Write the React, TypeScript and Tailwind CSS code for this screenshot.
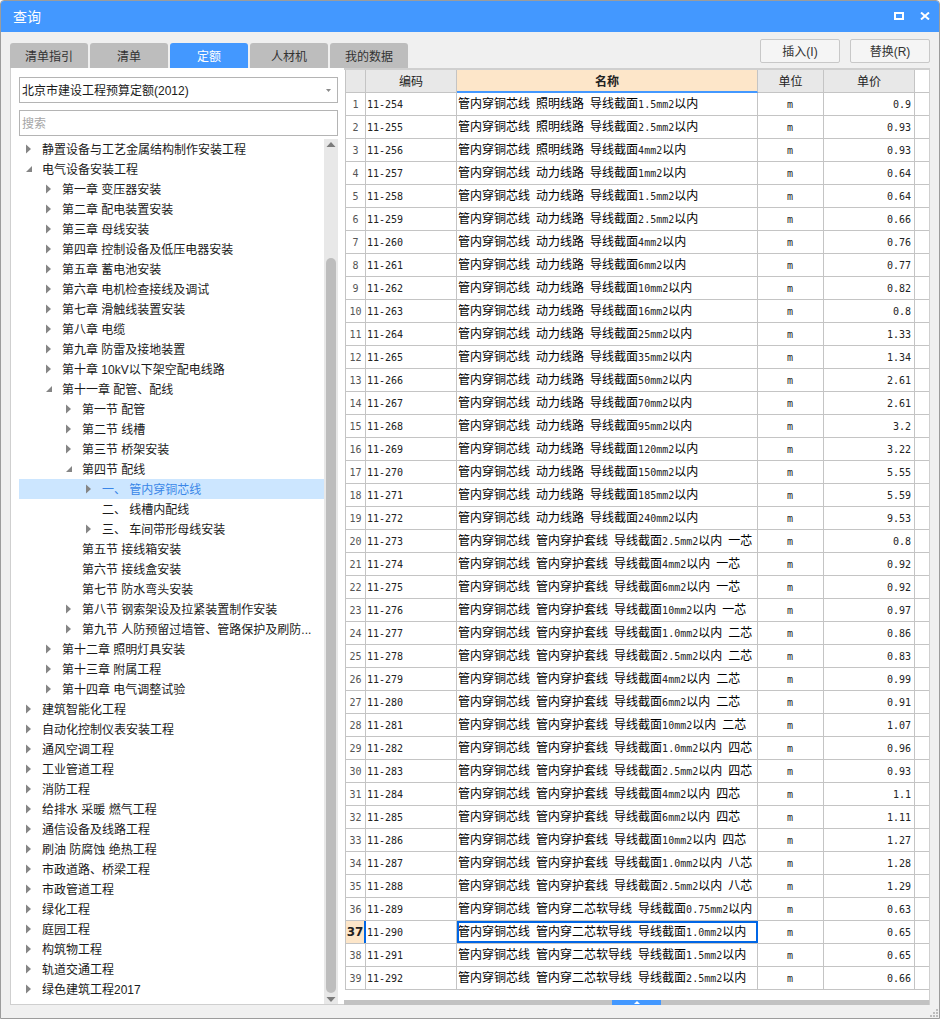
import { Fragment } from "react";

type TreeRow = { level: number; state?: "open" | "closed"; text: string; selected?: boolean };

const treeRows: TreeRow[] = [
  { level: 0, state: "closed", text: "静置设备与工艺金属结构制作安装工程" },
  { level: 0, state: "open", text: "电气设备安装工程" },
  { level: 1, state: "closed", text: "第一章 变压器安装" },
  { level: 1, state: "closed", text: "第二章 配电装置安装" },
  { level: 1, state: "closed", text: "第三章 母线安装" },
  { level: 1, state: "closed", text: "第四章 控制设备及低压电器安装" },
  { level: 1, state: "closed", text: "第五章 蓄电池安装" },
  { level: 1, state: "closed", text: "第六章 电机检查接线及调试" },
  { level: 1, state: "closed", text: "第七章 滑触线装置安装" },
  { level: 1, state: "closed", text: "第八章 电缆" },
  { level: 1, state: "closed", text: "第九章 防雷及接地装置" },
  { level: 1, state: "closed", text: "第十章 10kV以下架空配电线路" },
  { level: 1, state: "open", text: "第十一章 配管、配线" },
  { level: 2, state: "closed", text: "第一节 配管" },
  { level: 2, state: "closed", text: "第二节 线槽" },
  { level: 2, state: "closed", text: "第三节 桥架安装" },
  { level: 2, state: "open", text: "第四节 配线" },
  { level: 3, state: "closed", text: "一、 管内穿铜芯线", selected: true },
  { level: 3, text: "二、 线槽内配线" },
  { level: 3, state: "closed", text: "三、 车间带形母线安装" },
  { level: 2, text: "第五节 接线箱安装" },
  { level: 2, text: "第六节 接线盒安装" },
  { level: 2, text: "第七节 防水弯头安装" },
  { level: 2, state: "closed", text: "第八节 钢索架设及拉紧装置制作安装" },
  { level: 2, state: "closed", text: "第九节 人防预留过墙管、管路保护及刷防..." },
  { level: 1, state: "closed", text: "第十二章 照明灯具安装" },
  { level: 1, state: "closed", text: "第十三章 附属工程" },
  { level: 1, state: "closed", text: "第十四章 电气调整试验" },
  { level: 0, state: "closed", text: "建筑智能化工程" },
  { level: 0, state: "closed", text: "自动化控制仪表安装工程" },
  { level: 0, state: "closed", text: "通风空调工程" },
  { level: 0, state: "closed", text: "工业管道工程" },
  { level: 0, state: "closed", text: "消防工程" },
  { level: 0, state: "closed", text: "给排水 采暖 燃气工程" },
  { level: 0, state: "closed", text: "通信设备及线路工程" },
  { level: 0, state: "closed", text: "刷油 防腐蚀 绝热工程" },
  { level: 0, state: "closed", text: "市政道路、桥梁工程" },
  { level: 0, state: "closed", text: "市政管道工程" },
  { level: 0, state: "closed", text: "绿化工程" },
  { level: 0, state: "closed", text: "庭园工程" },
  { level: 0, state: "closed", text: "构筑物工程" },
  { level: 0, state: "closed", text: "轨道交通工程" },
  { level: 0, state: "closed", text: "绿色建筑工程2017" },
];

const indentClass = ["pl-[7px]", "pl-[27px]", "pl-[47px]", "pl-[67px]"];

const priceRows: [string, string][] = [
  ["管内穿铜芯线 照明线路 导线截面1.5mm2以内", "0.9"],
  ["管内穿铜芯线 照明线路 导线截面2.5mm2以内", "0.93"],
  ["管内穿铜芯线 照明线路 导线截面4mm2以内", "0.93"],
  ["管内穿铜芯线 动力线路 导线截面1mm2以内", "0.64"],
  ["管内穿铜芯线 动力线路 导线截面1.5mm2以内", "0.64"],
  ["管内穿铜芯线 动力线路 导线截面2.5mm2以内", "0.66"],
  ["管内穿铜芯线 动力线路 导线截面4mm2以内", "0.76"],
  ["管内穿铜芯线 动力线路 导线截面6mm2以内", "0.77"],
  ["管内穿铜芯线 动力线路 导线截面10mm2以内", "0.82"],
  ["管内穿铜芯线 动力线路 导线截面16mm2以内", "0.8"],
  ["管内穿铜芯线 动力线路 导线截面25mm2以内", "1.33"],
  ["管内穿铜芯线 动力线路 导线截面35mm2以内", "1.34"],
  ["管内穿铜芯线 动力线路 导线截面50mm2以内", "2.61"],
  ["管内穿铜芯线 动力线路 导线截面70mm2以内", "2.61"],
  ["管内穿铜芯线 动力线路 导线截面95mm2以内", "3.2"],
  ["管内穿铜芯线 动力线路 导线截面120mm2以内", "3.22"],
  ["管内穿铜芯线 动力线路 导线截面150mm2以内", "5.55"],
  ["管内穿铜芯线 动力线路 导线截面185mm2以内", "5.59"],
  ["管内穿铜芯线 动力线路 导线截面240mm2以内", "9.53"],
  ["管内穿铜芯线 管内穿护套线 导线截面2.5mm2以内 一芯", "0.8"],
  ["管内穿铜芯线 管内穿护套线 导线截面4mm2以内 一芯", "0.92"],
  ["管内穿铜芯线 管内穿护套线 导线截面6mm2以内 一芯", "0.92"],
  ["管内穿铜芯线 管内穿护套线 导线截面10mm2以内 一芯", "0.97"],
  ["管内穿铜芯线 管内穿护套线 导线截面1.0mm2以内 二芯", "0.86"],
  ["管内穿铜芯线 管内穿护套线 导线截面2.5mm2以内 二芯", "0.83"],
  ["管内穿铜芯线 管内穿护套线 导线截面4mm2以内 二芯", "0.99"],
  ["管内穿铜芯线 管内穿护套线 导线截面6mm2以内 二芯", "0.91"],
  ["管内穿铜芯线 管内穿护套线 导线截面10mm2以内 二芯", "1.07"],
  ["管内穿铜芯线 管内穿护套线 导线截面1.0mm2以内 四芯", "0.96"],
  ["管内穿铜芯线 管内穿护套线 导线截面2.5mm2以内 四芯", "0.93"],
  ["管内穿铜芯线 管内穿护套线 导线截面4mm2以内 四芯", "1.1"],
  ["管内穿铜芯线 管内穿护套线 导线截面6mm2以内 四芯", "1.11"],
  ["管内穿铜芯线 管内穿护套线 导线截面10mm2以内 四芯", "1.27"],
  ["管内穿铜芯线 管内穿护套线 导线截面1.0mm2以内 八芯", "1.28"],
  ["管内穿铜芯线 管内穿护套线 导线截面2.5mm2以内 八芯", "1.29"],
  ["管内穿铜芯线 管内穿二芯软导线 导线截面0.75mm2以内", "0.63"],
  ["管内穿铜芯线 管内穿二芯软导线 导线截面1.0mm2以内", "0.65"],
  ["管内穿铜芯线 管内穿二芯软导线 导线截面1.5mm2以内", "0.65"],
  ["管内穿铜芯线 管内穿二芯软导线 导线截面2.5mm2以内", "0.66"],
];

const tabs = ["清单指引", "清单", "定额", "人材机", "我的数据"];

const cellLine = "border-r border-[#c4c4c4]";
const sansFont = "font-['Liberation_Sans','Noto_Sans_CJK_SC',sans-serif]";
const monoFont = "font-['DejaVu_Sans_Mono',monospace] text-[10px] text-[#222]";

// half-width runs are 6px wide in the grid, same as half a CJK character
function Mixed({ text }: { text: string }) {
  const parts = text.split(/([\x20-\x7e]+)/).filter(Boolean);
  return (
    <>
      {parts.map((part, i) =>
        /^[\x20-\x7e]/.test(part) ? (
          <span key={i} className={monoFont}>
            {part}
          </span>
        ) : (
          <Fragment key={i}>{part}</Fragment>
        ),
      )}
    </>
  );
}

function TreeArrow({ state }: { state?: "open" | "closed" }) {
  return (
    <svg width="8" height="10" viewBox="0 0 8 10" className="mr-2 shrink-0" aria-hidden="true">
      {state === "closed" && <path d="M0 0.5 L5 5 L0 9.5 Z" fill="#858585" />}
      {state === "open" && <path d="M6 2 L6 8 L0 8 Z" fill="#858585" />}
    </svg>
  );
}

function TreeLine({ row }: { row: TreeRow }) {
  return (
    <div
      className={`flex h-5 items-center whitespace-pre ${indentClass[row.level]} ${
        row.selected ? "bg-[#cce6ff] text-[#3a86e8]" : "text-[#1a1a1a]"
      }`}
    >
      <TreeArrow state={row.state} />
      <span className="pt-[2px]">{row.text}</span>
    </div>
  );
}

function TreeScrollbar() {
  return (
    <div className="flex h-full w-[14px] shrink-0 flex-col items-center bg-[#e8e8e8]">
      <svg width="10" height="6" viewBox="0 0 10 6" className="mt-[3px] shrink-0" aria-hidden="true">
        <path d="M5 0 L9.5 5 L0.5 5 Z" fill="#7c7c7c" />
      </svg>
      <div className="mt-[110px] h-[735px] w-[10px] shrink-0 rounded-[5px] bg-[#bdbdbd]" />
      <svg width="10" height="6" viewBox="0 0 10 6" className="mt-[4px] shrink-0" aria-hidden="true">
        <path d="M0.5 0 L9.5 0 L5 5 Z" fill="#7c7c7c" />
      </svg>
    </div>
  );
}

function LeftPanel() {
  return (
    <div className="flex w-[334px] shrink-0 flex-col border-b border-l border-[#cfcfcf] bg-white pl-2 pr-[6px] pt-[9px]">
      <div className="flex h-[26px] shrink-0 items-center justify-between border border-[#b4b4b4] pl-[2px] pr-[6px] pt-[2px] text-[#1a1a1a]">
        <span>北京市建设工程预算定额(2012)</span>
        <svg width="5" height="3" viewBox="0 0 5 3" className="-mt-[2px]" aria-hidden="true">
          <path d="M0 0 L5 0 L2.5 3 Z" fill="#8a8a8a" />
        </svg>
      </div>
      <div className="mt-[7px] flex h-[26px] shrink-0 items-center border border-[#b4b4b4] pl-[2px] pt-[2px] text-[#a6a6a6]">
        搜索
      </div>
      <div className="mt-[3px] flex min-h-0 flex-1">
        <div className="min-w-0 flex-1">
          {treeRows.map((row, i) => (
            <TreeLine key={i} row={row} />
          ))}
        </div>
        <TreeScrollbar />
      </div>
    </div>
  );
}

const gridCols = "grid grid-cols-[21px_91px_301px_66px_91px]";

function HeaderRow() {
  return (
    <div className={`${gridCols} h-[23px] border-b border-[#c4c4c4] text-[#222]`}>
      <div className={`border-l border-[#c4c4c4] bg-[#e8e8e8] ${cellLine}`} />
      <div className={`flex items-center justify-center bg-[#e8e8e8] pt-[2px] ${cellLine}`}>编码</div>
      <div className="-mb-px flex items-center justify-center border-b-2 border-r border-b-[#4398ff] border-r-[#c4c4c4] bg-[#fde6c9] pt-[2px] font-bold">
        名称
      </div>
      <div className={`flex items-center justify-center bg-[#e8e8e8] pt-[2px] ${cellLine}`}>单位</div>
      <div className={`flex items-center justify-center bg-[#e8e8e8] pt-[2px] ${cellLine}`}>单价</div>
    </div>
  );
}

function PriceRow({ index, name, price }: { index: number; name: string; price: string }) {
  const active = index === 37;
  return (
    <div className={`${gridCols} h-[23px] border-b border-[#c4c4c4] text-black`}>
      <div
        className={`flex items-center justify-center border-l border-l-[#c4c4c4] ${
          active
            ? "border-r-2 border-r-[#0066e6] bg-[#fde6c9] text-[12px] font-bold text-[#222] font-['DejaVu_Sans',sans-serif]"
            : `${cellLine} font-['DejaVu_Sans_Mono',monospace] text-[10px] text-[#555]`
        }`}
      >
        {index}
      </div>
      <div className={`flex items-center pl-px ${cellLine} ${monoFont}`}>{`11-${253 + index}`}</div>
      <div
        className={`flex items-center whitespace-pre pl-px ${cellLine} ${
          active ? "relative z-10 outline-2 -outline-offset-2 outline-[#0066e6]" : ""
        }`}
      >
        <Mixed text={name} />
      </div>
      <div className={`flex items-center pl-[29px] ${cellLine} ${monoFont}`}>m</div>
      <div className={`flex items-center justify-end pr-[3px] ${cellLine} ${monoFont}`}>{price}</div>
    </div>
  );
}

function RightPanel() {
  return (
    <div className="flex w-[586px] shrink-0 flex-col border-r border-t-2 border-[#cfcfcf] bg-white pl-px">
      <div className="min-h-0 flex-1">
        <HeaderRow />
        {priceRows.map(([name, price], i) => (
          <PriceRow key={i} index={i + 1} name={name} price={price} />
        ))}
      </div>
      <div className="-ml-px flex h-[5px] shrink-0 bg-[#c2c2c2]">
        <div className="ml-[268px] flex h-[5px] w-[49px] items-center justify-center bg-[#4398ff]">
          <svg width="6" height="3" viewBox="0 0 6 3" aria-hidden="true">
            <path d="M3 0 L6 3 L0 3 Z" fill="#fff" />
          </svg>
        </div>
      </div>
    </div>
  );
}

export default function App() {
  return (
    <div
      className={`flex h-[1019px] w-[940px] flex-col overflow-hidden rounded-t-[4px] border border-[#9c9c9c] bg-[#f0f0f0] text-[12px] ${sansFont}`}
    >
      <div className="flex h-[31px] shrink-0 items-center justify-between bg-[#4398ff] pl-3 pr-[9px] text-white">
        <span className="pt-[2px] text-[14px]">查询</span>
        <div className="mb-px flex items-center gap-4">
          <div className="h-[8px] w-[10px] border-2 border-white" />
          <svg width="10" height="8" viewBox="0 0 10 8" aria-hidden="true">
            <path d="M1 0.5 L9 7.5 M9 0.5 L1 7.5" stroke="#fff" strokeWidth="2" />
          </svg>
        </div>
      </div>

      <div className="flex h-[36px] shrink-0 items-start px-[9px] pt-[11px]">
        <div className="flex gap-[2px]">
          {tabs.map((tab) => (
            <div
              key={tab}
              className={`flex h-[25px] w-[78px] items-center justify-center rounded-t-[3px] pt-[2px] ${
                tab === "定额" ? "bg-[#4398ff] text-white" : "bg-[#bdbdbd] text-[#333]"
              }`}
            >
              {tab}
            </div>
          ))}
        </div>
        <div className="-mt-[4px] ml-auto flex gap-[10px]">
          <button className="h-[24px] w-[80px] rounded-[2px] border border-[#c8c8c8] bg-[#f5f5f5] pt-[2px] text-[#333]">
            插入(I)
          </button>
          <button className="h-[24px] w-[80px] rounded-[2px] border border-[#c8c8c8] bg-[#f5f5f5] pt-[2px] text-[#333]">
            替换(R)
          </button>
        </div>
      </div>

      <div className="flex h-[937px] shrink-0 px-[9px]">
        <LeftPanel />
        <RightPanel />
      </div>

      <div className="flex min-h-0 flex-1 items-end justify-end pb-[1px] pr-[1px]">
        <svg width="8" height="8" viewBox="0 0 8 8" aria-hidden="true">
          <path d="M6 0h2v2H6zM3 3h2v2H3zM6 3h2v2H6zM0 6h2v2H0zM3 6h2v2H3zM6 6h2v2H6z" fill="#bdbdbd" />
        </svg>
      </div>
    </div>
  );
}
